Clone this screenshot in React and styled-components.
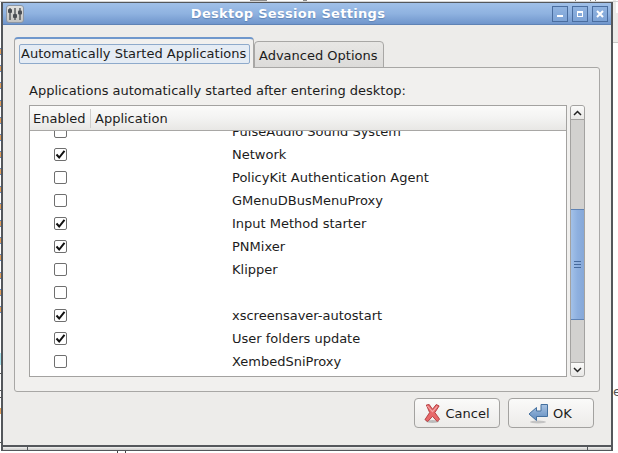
import React from "react";
import styled, { createGlobalStyle } from "styled-components";

const Global = createGlobalStyle`
  html, body { margin: 0; padding: 0; background: #fff; }
  #root { width: 618px; height: 453px; overflow: hidden; }
  * { box-sizing: border-box; }
`;

const Desktop = styled.div`
  position: relative;
  width: 618px;
  height: 453px;
  background: #fff;
  overflow: hidden;
  font-family: "DejaVu Sans", sans-serif;
  font-size: 13px;
  color: #1c1c1c;
`;

const Fragment = styled.div`
  position: absolute;
  left: ${p => p.$x}px;
  top: ${p => p.$y}px;
  width: ${p => p.$w}px;
  height: ${p => p.$h}px;
  background: ${p => p.$c};
`;

const DashStrip = styled.div`
  position: absolute;
  left: 0;
  top: 48px;
  width: 1px;
  height: 268px;
  background: repeating-linear-gradient(
    to bottom,
    #5f86c4 0, #5f86c4 1px,
    #e2a05c 1px, #e2a05c 6px,
    #5f86c4 6px, #5f86c4 7px,
    transparent 7px, transparent 17.2px
  );
`;

const SideGlyph = styled.span`
  position: absolute;
  left: 613px;
  top: 382px;
  font-size: 13px;
  line-height: 20px;
  color: #555;
`;

const Window = styled.div`
  position: absolute;
  left: 1px;
  top: 2px;
  width: 612px;
  height: 449px;
  display: flex;
  flex-direction: column;
  border: 1px solid #54575b;
  border-width: 1px 2px 1px 2px;
  background: #edecea;
`;

const TitleBar = styled.div`
  flex: 0 0 22px;
  display: flex;
  align-items: center;
  padding: 0 3px 0 3px;
  background: linear-gradient(to bottom, #a0c0e8 0%, #8fb2e0 50%, #7096cc 100%);
  border-bottom: 1px solid #5f83b5;
`;

const AppIcon = styled.div`
  width: 18px;
  height: 18px;
  border-radius: 3px;
  background: linear-gradient(to bottom, #e2e2e0, #c3c3c1);
  border: 1px solid #8d97a5;
  display: flex;
  align-items: center;
  justify-content: center;
`;

const Title = styled.div`
  flex: 1;
  text-align: center;
  color: #fff;
  font-weight: bold;
  font-size: 13px;
  letter-spacing: 0.3px;
  margin-top: -1px;
  text-shadow: 0 1px 1px #5f83b5;
`;

const TitleButtons = styled.div`
  display: flex;
  gap: 4px;
`;

const TitleButton = styled.div`
  width: 16px;
  height: 16px;
  border: 1px solid #4a6d9f;
  background: linear-gradient(to bottom, #90b3e0, #7da3d6);
  display: flex;
  align-items: center;
  justify-content: center;
`;

const Body = styled.div`
  flex: 1;
  display: flex;
  flex-direction: column;
  padding: 13px 17px 18px 11px;
  min-height: 0;
`;

const Notebook = styled.div`
  display: flex;
  flex-direction: column;
  height: 354px;
`;

const TabRow = styled.div`
  display: flex;
  align-items: flex-end;
  height: 30px;
  margin-bottom: -1px;
  position: relative;
  z-index: 1;
`;

const ActiveTab = styled.div`
  width: 240px;
  height: 31px;
  padding: 5px 3px 0 4px;
  background: #f1f0ee;
  border: 1px solid #a8a7a5;
  border-top: 2px solid #6f97cc;
  border-bottom: none;
  border-radius: 4px 4px 0 0;
`;

const FocusBox = styled.div`
  height: 20px;
  padding-left: 1px;
  line-height: 18px;
  white-space: nowrap;
  background: #e5ecf4;
  border: 1px solid #8eaacb;
  border-radius: 2px;
`;

const InactiveTab = styled.div`
  width: 130px;
  height: 27px;
  padding: 5px 0 0 4px;
  line-height: 18px;
  background: linear-gradient(to bottom, #e8e7e5, #dcdbd9);
  border: 1px solid #a8a7a5;
  border-radius: 4px 4px 0 0;
  white-space: nowrap;
`;

const Panel = styled.div`
  flex: 1;
  min-height: 0;
  width: 586px;
  display: flex;
  flex-direction: column;
  padding: 13px 14px 14px 14px;
  background: #f1f0ee;
  border: 1px solid #a8a7a5;
  border-radius: 0 3px 3px 3px;
`;

const Caption = styled.div`
  height: 23px;
  line-height: 20px;
  white-space: nowrap;
  margin-bottom: 1px;
`;

const ListArea = styled.div`
  flex: 1;
  min-height: 0;
  display: flex;
  gap: 3px;
`;

const List = styled.div`
  width: 538px;
  display: flex;
  flex-direction: column;
  border: 1px solid #a3a2a0;
  background: #fff;
  overflow: hidden;
`;

const ListHeader = styled.div`
  flex: 0 0 25px;
  display: flex;
  align-items: center;
  background: linear-gradient(to bottom, #fbfbfa 0%, #f3f3f2 50%, #e8e7e5 100%);
  border-bottom: 1px solid #a8a7a5;
`;

const HeaderCell = styled.div`
  width: ${p => p.$w || "auto"};
  padding-left: ${p => p.$pad}px;
  padding-top: 1px;
  line-height: 18px;
  border-right: ${p => (p.$sep ? "1px solid #cfcecc" : "none")};
`;

const Rows = styled.div`
  flex: 1;
  min-height: 0;
  overflow: hidden;
`;

const RowStack = styled.div`
  margin-top: -11px;
`;

const Row = styled.div`
  height: 23px;
  display: grid;
  grid-template-columns: 202px 1fr;
  align-items: center;
`;

const CheckCell = styled.div`
  padding-left: 24px;
  display: flex;
`;

const Check = styled.div`
  width: 13px;
  height: 13px;
  border: 1px solid #6f6f6f;
  border-radius: 2px;
  background: #fff;
  display: flex;
  align-items: center;
  justify-content: center;
`;

const Name = styled.div`
  line-height: 18px;
  white-space: nowrap;
`;

const ScrollBar = styled.div`
  width: 15px;
  height: 272px;
  display: flex;
  flex-direction: column;
  background: #d2d1cf;
  border: 1px solid #a3a2a0;
  border-radius: 3px;
  overflow: hidden;
`;

const ScrollButton = styled.div`
  flex: 0 0 14px;
  display: flex;
  align-items: center;
  justify-content: center;
  background: linear-gradient(to bottom, #fafaf9, #e9e8e6);
  border-${p => p.$side}: 1px solid #a3a2a0;
`;

const Trough = styled.div`
  flex: 1;
  min-height: 0;
  padding-top: 89px;
`;

const Thumb = styled.div`
  height: 111px;
  margin: 0 -1px;
  display: flex;
  align-items: center;
  justify-content: center;
  background: linear-gradient(to right, #a3c1e8, #8eb0df 50%, #86a8d8);
  border: 1px solid #5f83b5;
`;

const Grip = styled.div`
  width: 7px;
  height: 7px;
  border-top: 1px solid #466a9c;
  border-bottom: 1px solid #466a9c;
  display: flex;
  align-items: center;
  &::before {
    content: "";
    display: block;
    width: 100%;
    height: 1px;
    background: #466a9c;
  }
`;

const Actions = styled.div`
  display: flex;
  justify-content: flex-end;
  gap: 8px;
  margin-top: 6px;
`;

const Button = styled.div`
  width: 86px;
  height: 30px;
  display: flex;
  align-items: center;
  justify-content: center;
  gap: 4px;
  padding-right: ${p => p.$pad || 0}px;
  background: linear-gradient(to bottom, #fafaf9, #ecebe9);
  border: 1px solid #a3a2a0;
  border-radius: 4px;
`;

const ResizeBar = styled.div`
  flex: 0 0 5px;
  display: flex;
  border-top: 2px solid #54575b;
  background: linear-gradient(to bottom, #f0f0ef, #c9c9c8);
`;

const ResizeCorner = styled.div`
  width: ${p => p.$w}px;
  border-${p => p.$side}: 1px solid #54575b;
`;

const ResizeMiddle = styled.div`
  flex: 1;
`;

const CheckMark = () => (
  <svg width="11" height="11" viewBox="0 0 11 11">
    <path d="M1.5 5.5 L4.2 8.5 L9.5 1.8" fill="none" stroke="#111" strokeWidth="2" />
  </svg>
);

const SlidersIcon = () => (
  <svg width="16" height="14" viewBox="0 0 16 14">
    <g stroke="#3b3f44" strokeWidth="1.2" fill="none">
      <path d="M3 1v12M8 1v12M13 1v12" />
    </g>
    <rect x="1" y="2" width="4" height="4" rx="1" fill="#4a4e54" />
    <rect x="6" y="7" width="4" height="4" rx="1" fill="#4a4e54" />
    <rect x="11" y="3.5" width="4" height="4" rx="1" fill="#4a4e54" />
  </svg>
);

const CancelIcon = () => (
  <svg width="17" height="21" viewBox="0 0 18 21">
    <ellipse cx="9" cy="19" rx="7" ry="1.6" fill="#bbb" />
    <path
      d="M2.5 1.5 L5.5 1 L9 6 L13 1 L16 2.5 L11.5 9.5 L16.5 16.5 L14 19 L9 13.5 L4 19 L1 17 L6 9.5 Z"
      fill="#e8686a"
      stroke="#b23c3e"
      strokeWidth="1"
      strokeLinejoin="round"
    />
    <path d="M3.5 2.5 L9 8.5 L14 3" fill="none" stroke="#f4a6a6" strokeWidth="1.2" />
  </svg>
);

const OkIcon = () => (
  <svg width="21" height="21" viewBox="0 0 21 21">
    <defs>
      <linearGradient id="okFill" x1="0" y1="0" x2="0" y2="1">
        <stop offset="0" stopColor="#a9c3e2" />
        <stop offset="1" stopColor="#5f8bbf" />
      </linearGradient>
    </defs>
    <ellipse cx="10" cy="19" rx="8" ry="1.5" fill="#c4c4c4" />
    <path
      d="M1 11 L8.5 4.5 L8.5 8 L13 8 L13 1.5 L19.5 1.5 L19.5 13.5 L8.5 13.5 L8.5 17.5 Z"
      fill="url(#okFill)"
      stroke="#44709f"
      strokeWidth="1"
      strokeLinejoin="round"
    />
  </svg>
);

const apps = [
  ["PulseAudio Sound System", false],
  ["Network", true],
  ["PolicyKit Authentication Agent", false],
  ["GMenuDBusMenuProxy", false],
  ["Input Method starter", true],
  ["PNMixer", true],
  ["Klipper", false],
  ["", false],
  ["xscreensaver-autostart", true],
  ["User folders update", true],
  ["XembedSniProxy", false],
];

export default function App() {
  return (
    <Desktop>
      <Global />
      <Fragment $x={613} $y={0} $w={5} $h={42} $c="#ecebe9" />
      <Fragment $x={613} $y={42} $w={5} $h={1} $c="#c9c8c6" />
      <Fragment $x={616} $y={0} $w={2} $h={13} $c="#fff" />
      <Fragment $x={575} $y={0} $w={1} $h={2} $c="#888" />
      <Fragment $x={590} $y={0} $w={1} $h={2} $c="#888" />
      <Fragment $x={595} $y={0} $w={1} $h={2} $c="#888" />
      <Fragment $x={250} $y={0} $w={17} $h={2} $c="#8b8b8b" />
      <Fragment $x={303} $y={0} $w={4} $h={2} $c="#8b8b8b" />
      <Fragment $x={0} $y={1} $w={618} $h={1} $c="#d4d4d4" />
      <DashStrip />
      <Fragment $x={0} $y={353} $w={1} $h={12} $c="#a9e4ee" />
      <Fragment $x={0} $y={408} $w={1} $h={6} $c="#e2a05c" />
      <Fragment $x={0} $y={373} $w={1} $h={1} $c="#555" />
      <Fragment $x={0} $y={390} $w={1} $h={1} $c="#555" />
      <Fragment $x={0} $y={397} $w={1} $h={1} $c="#555" />
      <Fragment $x={0} $y={442} $w={1} $h={1} $c="#555" />
      <Fragment $x={117} $y={451} $w={1} $h={2} $c="#444" />
      <Fragment $x={125} $y={451} $w={1} $h={2} $c="#444" />
      <SideGlyph>e</SideGlyph>
      <Window>
        <TitleBar>
          <AppIcon>
            <SlidersIcon />
          </AppIcon>
          <Title>Desktop Session Settings</Title>
          <TitleButtons>
            <TitleButton>
              <svg width="8" height="8" viewBox="0 0 8 8">
                <rect x="1" y="5" width="6" height="2" fill="#fff" />
              </svg>
            </TitleButton>
            <TitleButton>
              <svg width="8" height="8" viewBox="0 0 8 8">
                <path d="M1 1h6v6H1z M2 3v3h4V3z" fill="#fff" fillRule="evenodd" />
              </svg>
            </TitleButton>
            <TitleButton>
              <svg width="8" height="8" viewBox="0 0 8 8">
                <path d="M1 1 L7 7 M7 1 L1 7" stroke="#fff" strokeWidth="2" />
              </svg>
            </TitleButton>
          </TitleButtons>
        </TitleBar>
        <Body>
          <Notebook>
            <TabRow>
              <ActiveTab>
                <FocusBox>Automatically Started Applications</FocusBox>
              </ActiveTab>
              <InactiveTab>Advanced Options</InactiveTab>
            </TabRow>
            <Panel>
              <Caption>Applications automatically started after entering desktop:</Caption>
              <ListArea>
                <List>
                  <ListHeader>
                    <HeaderCell $w="61px" $pad={3} $sep>Enabled</HeaderCell>
                    <HeaderCell $pad={4}>Application</HeaderCell>
                  </ListHeader>
                  <Rows>
                    <RowStack>
                      {apps.map(([name, on], i) => (
                        <Row key={i}>
                          <CheckCell>
                            <Check>{on && <CheckMark />}</Check>
                          </CheckCell>
                          <Name>{name}</Name>
                        </Row>
                      ))}
                    </RowStack>
                  </Rows>
                </List>
                <ScrollBar>
                  <ScrollButton $side="bottom">
                    <svg width="9" height="6" viewBox="0 0 9 6">
                      <path d="M1 5 L4.5 1.5 L8 5" fill="none" stroke="#222" strokeWidth="1.5" />
                    </svg>
                  </ScrollButton>
                  <Trough>
                    <Thumb>
                      <Grip />
                    </Thumb>
                  </Trough>
                  <ScrollButton $side="top">
                    <svg width="9" height="6" viewBox="0 0 9 6">
                      <path d="M1 1 L4.5 4.5 L8 1" fill="none" stroke="#222" strokeWidth="1.5" />
                    </svg>
                  </ScrollButton>
                </ScrollBar>
              </ListArea>
            </Panel>
          </Notebook>
          <Actions>
            <Button>
              <CancelIcon />
              Cancel
            </Button>
            <Button $pad={2}>
              <OkIcon />
              OK
            </Button>
          </Actions>
        </Body>
        <ResizeBar>
          <ResizeCorner $w={25} $side="right" />
          <ResizeMiddle />
          <ResizeCorner $w={24} $side="left" />
        </ResizeBar>
      </Window>
    </Desktop>
  );
}
